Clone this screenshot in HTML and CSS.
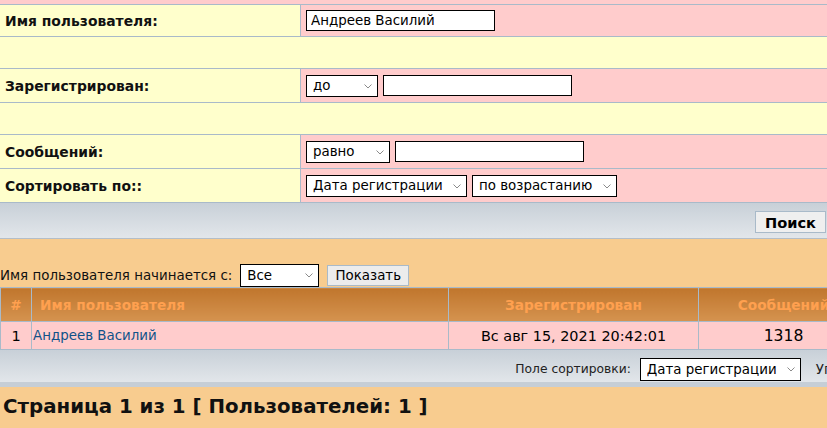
FILE: index.html
```html
<!DOCTYPE html>
<html lang="ru">
<head>
<meta charset="utf-8">
<title>Пользователи</title>
<link rel="stylesheet" href="styles.css">
</head>
<body>
<div class="page">
  <div class="strip"></div>
  <form class="search">
    <div class="frow">
      <div class="flabel">Имя пользователя:</div>
      <div class="ffield"><input class="txt w189" type="text" value="Андреев Василий"></div>
    </div>
    <div class="frow gaprow"></div>
    <div class="frow tall">
      <div class="flabel">Зарегистрирован:</div>
      <div class="ffield">
        <span class="selwrap"><select class="sel w72"><option>до</option></select><svg class="chev" width="8" height="5" viewBox="0 0 8 5"><path d="M0.5 0.5 L4 4 L7.5 0.5" fill="none" stroke="#8a8a8a" stroke-width="1"/></svg></span>
        <input class="txt w189" type="text" value="">
      </div>
    </div>
    <div class="frow gaprow"></div>
    <div class="frow tall">
      <div class="flabel">Сообщений:</div>
      <div class="ffield">
        <span class="selwrap"><select class="sel w84"><option>равно</option></select><svg class="chev" width="8" height="5" viewBox="0 0 8 5"><path d="M0.5 0.5 L4 4 L7.5 0.5" fill="none" stroke="#8a8a8a" stroke-width="1"/></svg></span>
        <input class="txt w189" type="text" value="">
      </div>
    </div>
    <div class="frow tall">
      <div class="flabel">Сортировать по::</div>
      <div class="ffield">
        <span class="selwrap"><select class="sel w161"><option>Дата регистрации</option></select><svg class="chev" width="8" height="5" viewBox="0 0 8 5"><path d="M0.5 0.5 L4 4 L7.5 0.5" fill="none" stroke="#8a8a8a" stroke-width="1"/></svg></span>
        <span class="selwrap"><select class="sel w145"><option>по возрастанию</option></select><svg class="chev" width="8" height="5" viewBox="0 0 8 5"><path d="M0.5 0.5 L4 4 L7.5 0.5" fill="none" stroke="#8a8a8a" stroke-width="1"/></svg></span>
      </div>
    </div>
    <div class="bar bar-top">
      <button class="btn-search" type="button">Поиск</button>
    </div>
  </form>

  <div class="lower">
    <div class="filter">
      <span class="filter-label">Имя пользователя начинается с:</span>
      <span class="selwrap"><select class="sel w79 tall-sel"><option>Все</option></select><svg class="chev" width="8" height="5" viewBox="0 0 8 5"><path d="M0.5 0.5 L4 4 L7.5 0.5" fill="none" stroke="#8a8a8a" stroke-width="1"/></svg></span>
      <button class="btn-light btn-show" type="button">Показать</button>
    </div>

    <table class="members">
      <colgroup>
        <col class="k-num">
        <col class="k-name">
        <col class="k-date">
        <col class="k-posts">
        <col class="k-rank">
      </colgroup>
      <thead>
        <tr>
          <th>#</th>
          <th class="c-name">Имя пользователя</th>
          <th>Зарегистрирован</th>
          <th>Сообщений</th>
          <th>Ранг</th>
        </tr>
      </thead>
      <tbody>
        <tr>
          <td class="c-num">1</td>
          <td class="c-name"><a href="#">Андреев Василий</a></td>
          <td class="c-date">Вс авг 15, 2021 20:42:01</td>
          <td class="c-posts">1318</td>
          <td></td>
        </tr>
      </tbody>
    </table>

    <div class="bar bar-bottom">
      <span class="sort-label">Поле сортировки:</span>
      <span class="selwrap"><select class="sel w161 tall-sel"><option>Дата регистрации</option></select><svg class="chev" width="8" height="5" viewBox="0 0 8 5"><path d="M0.5 0.5 L4 4 L7.5 0.5" fill="none" stroke="#8a8a8a" stroke-width="1"/></svg></span>
      <span class="order-label">Упорядочить:</span>
      <span class="selwrap"><select class="sel w145 tall-sel"><option>по возрастанию</option></select><svg class="chev" width="8" height="5" viewBox="0 0 8 5"><path d="M0.5 0.5 L4 4 L7.5 0.5" fill="none" stroke="#8a8a8a" stroke-width="1"/></svg></span>
      <button class="btn-light" type="button">Перейти</button>
    </div>

    <div class="pagination">Страница 1 из 1 [ Пользователей: 1 ]</div>
  </div>
</div>
</body>
</html>
```

FILE: styles.css
```css
html, body {
  margin: 0;
  padding: 0;
}
body {
  width: 827px;
  height: 428px;
  overflow: hidden;
  background: #f8cc8f;
  font-family: "DejaVu Sans", Verdana, sans-serif;
  font-size: 13.4px;
  color: #000;
}
.page {
  width: 827px;
}
.strip {
  height: 4px;
  background: #ffcccc;
}
.search {
  margin: 0;
  border-top: 1px solid #a9bac9;
}
.frow {
  display: flex;
  height: 32px;
  box-sizing: border-box;
  border-bottom: 1px solid #a9bac9;
}
.frow.tall {
  height: 34px;
}
.gaprow {
  background: #ffffcc;
}
.flabel {
  width: 301px;
  box-sizing: border-box;
  border-right: 1px solid #a9bac9;
  background: #ffffcc;
  font-weight: bold;
  font-size: 13.9px;
  color: #111;
  padding-left: 5px;
  display: flex;
  align-items: center;
}
.ffield {
  flex: 1;
  background: #ffcccc;
  display: flex;
  align-items: center;
  gap: 5px;
  padding-left: 5px;
}
.txt {
  box-sizing: border-box;
  height: 21px;
  border: 1px solid #000;
  background: #fff;
  padding: 0 4px;
  margin: 0;
  font-family: "DejaVu Sans", Verdana, sans-serif;
  font-size: 13.4px;
  color: #000;
  border-radius: 0;
  outline: none;
}
.selwrap {
  position: relative;
  display: inline-flex;
}
.sel {
  -webkit-appearance: none;
  appearance: none;
  box-sizing: border-box;
  height: 22px;
  border: 1px solid #000;
  border-radius: 0;
  background-color: #fff;
  margin: 0;
  padding: 0 16px 0 6px;
  font-family: "DejaVu Sans", Verdana, sans-serif;
  font-size: 13.4px;
  color: #000;
}
.chev {
  position: absolute;
  right: 6px;
  top: 9px;
  pointer-events: none;
}
.tall-sel {
  height: 23px;
}
.w189 { width: 189px; }
.w72 { width: 72px; }
.w84 { width: 84px; }
.w161 { width: 161px; }
.w145 { width: 145px; }
.w79 { width: 79px; }

.bar {
  background: linear-gradient(to bottom, #c8d0d8 0%, #e2e6ea 100%);
  display: flex;
}
.bar-top {
  height: 36px;
  box-sizing: border-box;
  border-bottom: 1px solid #b4bec8;
  justify-content: flex-end;
  align-items: flex-start;
  padding-top: 8px;
  padding-right: 1px;
}
.btn-search {
  box-sizing: border-box;
  width: 71px;
  height: 22px;
  margin: 0;
  padding: 0;
  border: 1px solid #a9bac9;
  background: #efefef;
  font-family: "DejaVu Sans", Verdana, sans-serif;
  font-size: 14.6px;
  font-weight: bold;
  color: #000;
}

.lower {
  width: 1160px;
}
.filter {
  display: flex;
  align-items: center;
  height: 23px;
  padding-top: 25px;
}
.filter-label {
  margin-right: 8px;
  color: #111;
}
.btn-light {
  box-sizing: border-box;
  height: 21px;
  margin: 0 0 0 8px;
  padding: 0 10px;
  border: 1px solid #a9bac9;
  background: #ececec;
  font-family: "DejaVu Sans", Verdana, sans-serif;
  font-size: 13.4px;
  color: #000;
}
.btn-show {
  width: 82px;
  padding: 0;
}

.members {
  width: 100%;
  border-collapse: collapse;
  table-layout: fixed;
}
.k-num { width: 31px; }
.k-name { width: 417px; }
.k-date { width: 250px; }
.k-posts { width: 170px; }
.members th,
.members td {
  border: 1px solid #a9bac9;
  padding: 0;
  white-space: nowrap;
  overflow: hidden;
}
.members th {
  height: 33px;
  background: linear-gradient(to bottom, #c0762d 0%, #d5934f 100%);
  color: #ffa04f;
  font-weight: bold;
  font-size: 13.7px;
  text-align: center;
}
.members td {
  height: 27px;
  background: #ffcccc;
  text-align: center;
}
.members th.c-name { text-align: left; padding-left: 8px; }
.members td.c-name { text-align: left; padding-left: 1px; }
.members td.c-num { font-size: 14.5px; }
.members td.c-date { font-size: 14.4px; }
.members td.c-posts { font-size: 15.6px; }
.members a {
  color: #105289;
  text-decoration: none;
}

.bar-bottom {
  height: 37px;
  box-sizing: border-box;
  border-bottom: 5px solid #c6ced6;
  justify-content: flex-end;
  align-items: flex-start;
  padding-top: 8px;
  padding-right: 4px;
}
.sort-label,
.order-label {
  line-height: 23px;
  margin-right: 9px;
  color: #222;
}
.sort-label {
  font-size: 12.3px;
}
.order-label {
  margin-left: 15px;
}
.bar-bottom .btn-light {
  height: 23px;
}

.pagination {
  padding: 8px 0 0 3px;
  font-size: 19.8px;
  font-weight: bold;
  line-height: 24px;
  color: #111;
}
```
